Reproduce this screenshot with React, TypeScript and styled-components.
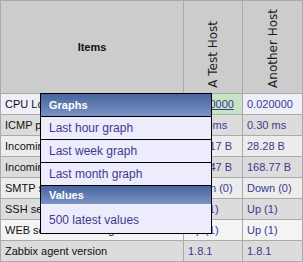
import React from 'react';
import styled, { createGlobalStyle } from 'styled-components';

type Row = {
  name: string;
  values: string[];
  tone: 'hi' | 'light' | 'dark' | 'pale';
};

const rows: Row[] = [
  { name: 'CPU Load', values: ['0.020000', '0.020000'], tone: 'hi' },
  { name: 'ICMP ping', values: ['0.30 ms', '0.30 ms'], tone: 'dark' },
  { name: 'Incoming traffic on interface eth0', values: ['128.17 B', '28.28 B'], tone: 'light' },
  { name: 'Incoming traffic on interface lo', values: ['166.47 B', '168.77 B'], tone: 'dark' },
  { name: 'SMTP server is running', values: ['Down (0)', 'Down (0)'], tone: 'light' },
  { name: 'SSH server is running', values: ['Up (1)', 'Up (1)'], tone: 'dark' },
  { name: 'WEB server is running', values: ['Up (1)', 'Up (1)'], tone: 'pale' },
  { name: 'Zabbix agent version', values: ['1.8.1', '1.8.1'], tone: 'dark' },
];

const hosts = ['A Test Host', 'Another Host'];

const tones = {
  hi: '#efeffc',
  light: '#ececec',
  dark: '#dcdcdc',
  pale: '#f4f4f4',
};

const menu = [
  { title: 'Graphs', items: ['Last hour graph', 'Last week graph', 'Last month graph'] },
  { title: 'Values', items: ['500 latest values'] },
];

const App: React.FC = () => {
  return (
    <Page>
      <GlobalStyle />
      <Grid>
        <ItemsHead>Items</ItemsHead>
        {hosts.map(host => (
          <HostHead key={host}>
            <VerticalText>{host}</VerticalText>
          </HostHead>
        ))}
        {rows.map((row, i) => (
          <React.Fragment key={i}>
            <NameCell $bg={tones[row.tone]}>{row.name}</NameCell>
            {row.values.map((value, j) => (
              <ValueCell
                key={j}
                $bg={i === 0 && j === 0 ? '#c4e4c4' : tones[row.tone]}
                $link={i === 0 && j === 0}
              >
                {value}
              </ValueCell>
            ))}
          </React.Fragment>
        ))}
      </Grid>
      <Menu>
        {menu.map(section => {
          const last = section.title === 'Values';
          return (
            <React.Fragment key={section.title}>
              <MenuTitle $short={last}>{section.title}</MenuTitle>
              {section.items.map(item => (
                <MenuItem key={item} $last={last}>
                  {item}
                </MenuItem>
              ))}
            </React.Fragment>
          );
        })}
      </Menu>
    </Page>
  );
};

const GlobalStyle = createGlobalStyle`
  body {
    margin: 0;
    background: #ffffff;
    font-family: "Liberation Sans", Arial, sans-serif;
  }
`;

const Page = styled.div`
  position: relative;
  width: 303px;
  height: 262px;
  overflow: hidden;
`;

const Grid = styled.div`
  display: grid;
  grid-template-columns: 182px 58px 59px;
  grid-template-rows: 92px repeat(8, 20px);
  gap: 1px;
  border: 1px solid #aaaaaa;
  background: #aaaaaa;
  width: 301px;
`;

const ItemsHead = styled.div`
  background: #cccccc;
  display: flex;
  align-items: center;
  justify-content: center;
  font-size: 11px;
  font-weight: bold;
  color: #111111;
`;

const HostHead = styled.div`
  background: #cccccc;
  display: flex;
  align-items: flex-end;
  justify-content: center;
  padding-bottom: 5px;
`;

const VerticalText = styled.span`
  writing-mode: vertical-rl;
  transform: rotate(180deg);
  font-family: "DejaVu Sans", sans-serif;
  font-size: 12px;
  color: #1c1c1c;
  white-space: nowrap;
  line-height: 14px;
`;

const NameCell = styled.div<{ $bg: string }>`
  background: ${p => p.$bg};
  display: flex;
  align-items: center;
  padding: 0 4px;
  font-size: 11px;
  color: #111111;
  white-space: nowrap;
  overflow: hidden;
`;

const ValueCell = styled.div<{ $bg: string; $link: boolean }>`
  background: ${p => p.$bg};
  display: flex;
  align-items: center;
  padding: 0 4px;
  font-size: 11px;
  color: #3b3990;
  white-space: nowrap;
  overflow: hidden;
  text-decoration: ${p => (p.$link ? 'underline' : 'none')};
`;

const Menu = styled.div`
  position: absolute;
  left: 40px;
  top: 93px;
  width: 170px;
  border: 1px solid #000000;
  background: #ececfc;
  display: flex;
  flex-direction: column;
`;

const MenuTitle = styled.div<{ $short: boolean }>`
  height: ${p => (p.$short ? '18px' : '22px')};
  border-bottom: ${p => (p.$short ? 'none' : '1px solid #000000')};
  background: linear-gradient(#46649e, #7a93c3);
  color: #ffffff;
  font-size: 11px;
  font-weight: bold;
  display: flex;
  align-items: center;
  padding-left: 8px;
`;

const MenuItem = styled.div<{ $last: boolean }>`
  height: ${p => (p.$last ? '26px' : '22px')};
  border-bottom: ${p => (p.$last ? 'none' : '1px solid #000000')};
  font-size: 12px;
  color: #3f3a8c;
  display: flex;
  align-items: center;
  padding-left: 8px;
  padding-top: ${p => (p.$last ? '3px' : '0')};
`;

export default App;
